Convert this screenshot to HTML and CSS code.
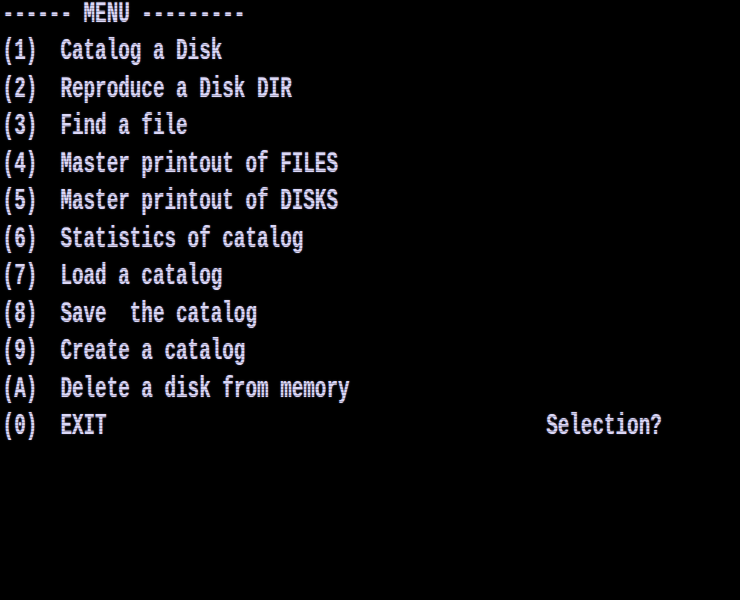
FILE: index.html
```html
<!DOCTYPE html>
<html>
<head>
<meta charset="utf-8">
<link rel="stylesheet" href="styles.css">
</head>
<body>
<div class="crt">
  <div class="screen">
    <div class="line">------ MENU ---------</div>
    <div class="line">(1)  Catalog a Disk</div>
    <div class="line">(2)  Reproduce a Disk DIR</div>
    <div class="line">(3)  Find a file</div>
    <div class="line">(4)  Master printout of FILES</div>
    <div class="line">(5)  Master printout of DISKS</div>
    <div class="line">(6)  Statistics of catalog</div>
    <div class="line">(7)  Load a catalog</div>
    <div class="line">(8)  Save  the catalog</div>
    <div class="line">(9)  Create a catalog</div>
    <div class="line">(A)  Delete a disk from memory</div>
    <div class="line">(0)  EXIT                                      Selection?</div>
  </div>
  <div class="scanlines"></div>
</div>
</body>
</html>
```
FILE: styles.css
```css
html, body {
  margin: 0;
  padding: 0;
  background: #000;
}
.crt {
  position: relative;
  width: 740px;
  height: 600px;
  overflow: hidden;
  background: #000;
}
.screen {
  font-family: "Liberation Mono", "DejaVu Sans Mono", monospace;
  font-size: 30px;
  font-weight: bold;
  line-height: 37.45px;
  color: #dcd8f8;
  text-shadow: 0 0 2px rgba(200, 196, 255, 0.55);
  transform: scaleX(0.6424);
  transform-origin: 0 0;
  margin-top: -4px;
  padding-left: 4px;
  width: 1200px;
}
.line {
  white-space: pre;
}
.scanlines {
  position: absolute;
  inset: 0;
  background: repeating-linear-gradient(to bottom, rgba(0,0,0,0) 0px, rgba(0,0,0,0) 2px, rgba(0,0,0,0.25) 2px, rgba(0,0,0,0.25) 3px);
  pointer-events: none;
}
```
